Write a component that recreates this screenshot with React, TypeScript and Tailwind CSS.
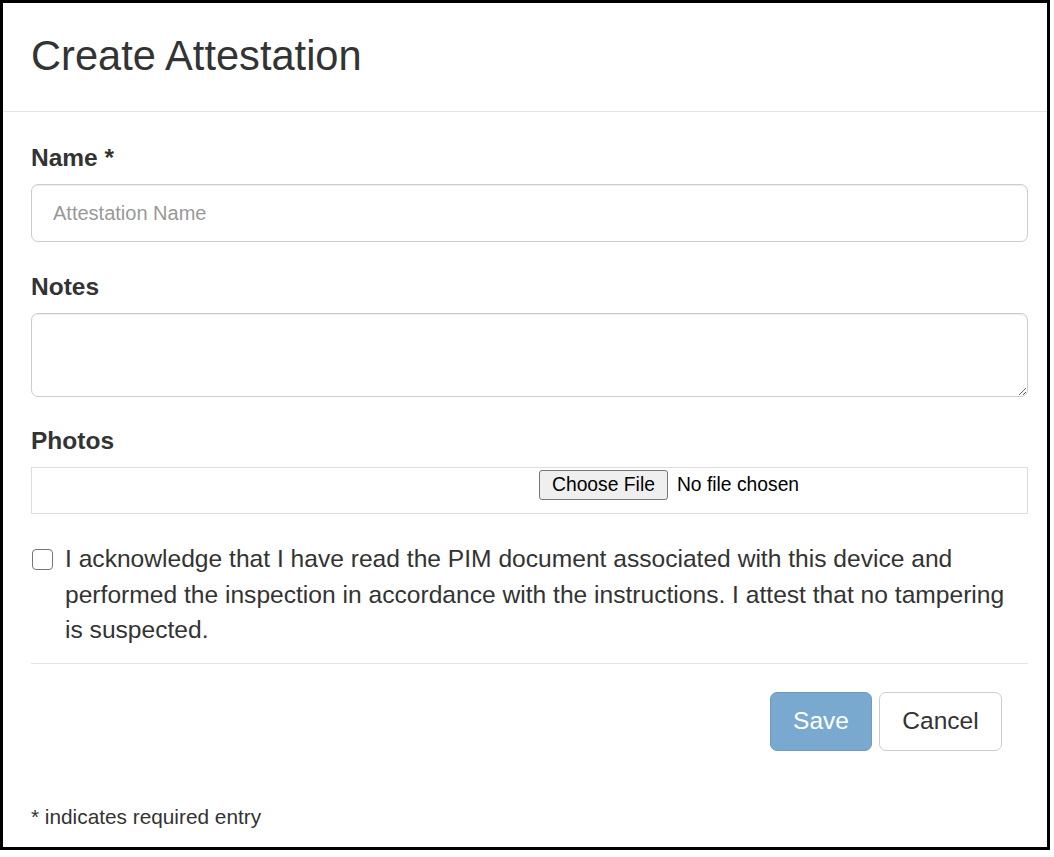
import React from "react";

function Label({ children }: { children: React.ReactNode }) {
  return <label className="block text-[24.5px] leading-[35px] font-bold text-[#333] mb-[9px]">{children}</label>;
}

export default function App() {
  return (
    <div className="bg-white w-[1054px] h-[857px] font-['Liberation_Sans',Arial,sans-serif] text-[#333]">
      <div className="w-[1050px] h-[850px] border-[3px] border-black flex flex-col">
        {/* header */}
        <div className="pl-[28px] pt-[30px] pb-[32px] border-b border-[#e5e5e5]">
          <h1 className="text-[41.6px] leading-[46px] font-normal text-[#333]">Create Attestation</h1>
        </div>

        {/* body */}
        <div className="pl-[28px] pr-[19px] pt-[28px] flex flex-col">
          <div className="mb-[27px]">
            <Label>Name *</Label>
            <input
              type="text"
              placeholder="Attestation Name"
              className="w-full h-[58px] px-[21px] border border-[#ccc] rounded-[7px] text-[20px] text-[#555] placeholder:text-[#999] outline-none shadow-[inset_0_1px_1px_rgba(0,0,0,0.075)]"
            />
          </div>

          <div className="mb-[26px]">
            <Label>Notes</Label>
            <textarea className="block w-full h-[84px] px-[21px] py-[10px] border border-[#ccc] rounded-[7px] text-[20px] outline-none resize-y shadow-[inset_0_1px_1px_rgba(0,0,0,0.075)]" />
          </div>

          <div>
            <Label>Photos</Label>
            <div className="w-full h-[47px] border border-[#ddd] flex items-start pt-[2px] pl-[507px]">
              <button className="h-[30px] px-[12px] bg-[#efefef] border border-[#767676] rounded-[3px] text-[19.3px] leading-none text-black">
                Choose File
              </button>
              <span className="ml-[9px] text-[19.3px] leading-[30px] text-black">No file chosen</span>
            </div>
          </div>

          <div className="flex items-start mt-[27px]">
            <div className="mt-[8px] ml-[1px] w-[21px] h-[21px] shrink-0 border-[1.5px] border-[#767676] rounded-[4px] bg-white" />
            <p className="ml-[12px] mr-[14px] text-[24.6px] leading-[35.5px] text-[#333]">
              I acknowledge that I have read the PIM document associated with this device and performed the inspection in accordance with the instructions. I attest that no tampering is suspected.
            </p>
          </div>

          <div className="mt-[15px] border-t border-[#e5e5e5] pt-[28px] pr-[26px] flex justify-end gap-[7px]">
            <button className="w-[102px] h-[59px] rounded-[7px] bg-[#7aa9d0] border border-[#6a9cc8] text-white text-[24.5px]">
              Save
            </button>
            <button className="w-[123px] h-[59px] rounded-[7px] bg-white border border-[#ccc] text-[#333] text-[24.5px]">
              Cancel
            </button>
          </div>

          <p className="mt-[51px] text-[20.8px] leading-[30px] text-[#333]">* indicates required entry</p>
        </div>
      </div>
    </div>
  );
}
